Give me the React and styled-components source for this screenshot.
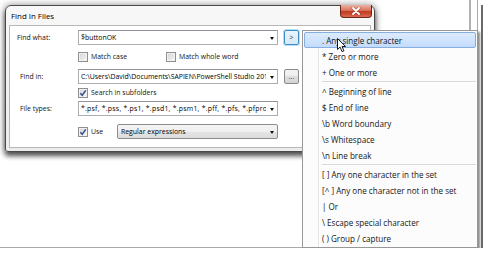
import React from "react";
import styled, { createGlobalStyle } from "styled-components";

const GlobalStyle = createGlobalStyle`
  html, body {
    margin: 0;
    padding: 0;
    background: #fff;
  }
  body {
    font-family: "Open Sans", "Noto Sans", sans-serif;
    color: #1b1b1b;
  }
`;

const patterns = [
  { text: ". Any single character", active: true },
  { text: "* Zero or more" },
  { text: "+ One or more" },
  { sep: true },
  { text: "^ Beginning of line" },
  { text: "$ End of line" },
  { text: "\\b Word boundary" },
  { text: "\\s Whitespace" },
  { text: "\\n Line break" },
  { sep: true },
  { text: "[ ] Any one character in the set" },
  { text: "[^ ] Any one character not in the set" },
  { text: "| Or" },
  { text: "\\ Escape special character" },
  { text: "( ) Group / capture" },
];

const CheckMark = () => (
  <svg width="8" height="8" viewBox="0 0 8 8">
    <path d="M1.3 4.2 L3.2 6.3 L6.8 1.4" fill="none" stroke="#3b4f8c" strokeWidth="1.5" />
  </svg>
);

const Checkbox = ({ checked }) => <Box>{checked && <CheckMark />}</Box>;

const App = () => {
  return (
    <>
      <GlobalStyle />
      <Stage>
        <Dialog>
          <TitleBar>
            <Title>Find In Files</Title>
            <CloseButton>
              <svg width="10" height="8" viewBox="0 0 10 8">
                <path d="M2 1 L8 7 M8 1 L2 7" stroke="#7a2414" strokeWidth="3" strokeLinecap="round" opacity="0.5" />
                <path d="M2 1 L8 7 M8 1 L2 7" stroke="#fff" strokeWidth="1.8" strokeLinecap="round" />
              </svg>
            </CloseButton>
          </TitleBar>
          <Client>
            <FieldRow $top={4}>
              <Label $indent={7}>Find what:</Label>
              <Combo>
                <ComboText>$buttonOK</ComboText>
                <Arrow />
              </Combo>
              <SmallButton $focused>&gt;</SmallButton>
            </FieldRow>
            <OptionRow $top={6}>
              <Option $width={88}>
                <Checkbox />
                Match case
              </Option>
              <Option>
                <Checkbox />
                Match whole word
              </Option>
            </OptionRow>
            <FieldRow $top={7}>
              <Label $indent={10}>Find in:</Label>
              <Combo>
                <ComboText>C:\Users\David\Documents\SAPIEN\PowerShell Studio 2012</ComboText>
                <Arrow />
              </Combo>
              <SmallButton>...</SmallButton>
            </FieldRow>
            <OptionRow $top={3}>
              <Option>
                <Checkbox checked />
                Search in subfolders
              </Option>
            </OptionRow>
            <FieldRow $top={3}>
              <Label $indent={10}>File types:</Label>
              <Combo>
                <ComboText $spacing={0.25}>
                  *.psf, *.pss, *.ps1, *.psd1, *.psm1, *.pff, *.pfs, *.pfproj
                </ComboText>
                <Arrow />
              </Combo>
            </FieldRow>
            <OptionRow $top={8} $height={15}>
              <Option $width={39}>
                <Checkbox checked />
                Use
              </Option>
              <Select>
                <ComboText>Regular expressions</ComboText>
                <Arrow />
              </Select>
            </OptionRow>
          </Client>
        </Dialog>

        <Menu>
          {patterns.map((p, i) =>
            p.sep ? (
              <Separator key={i} />
            ) : (
              <MenuItem key={i} $active={p.active}>
                {p.text}
              </MenuItem>
            )
          )}
        </Menu>

        <Cursor width="10" height="15" viewBox="0 0 10 15">
          <path
            d="M0.5 0.5 L0.5 11.5 L3.1 9.1 L5 13.6 L6.9 12.8 L5 8.5 L8.6 8.5 Z"
            fill="#fff"
            stroke="#000"
            strokeWidth="0.9"
            strokeLinejoin="round"
          />
        </Cursor>
      </Stage>
    </>
  );
};

export default App;

const Stage = styled.div`
  position: relative;
  width: 478px;
  height: 248px;
  box-sizing: border-box;
  padding: 5px 0 0 5px;
  background: #fff;
  border-right: 1px solid #a9a9a9;
  border-bottom: 1px solid #a9a9a9;
  box-shadow: 3px 3px 0 0 #fff, 5px 5px 0 0 #6a6a6a;

  &::before {
    content: "";
    position: absolute;
    left: 469px;
    top: 0;
    width: 2px;
    height: 40px;
    background: #b0b0b0;
  }
`;

const Dialog = styled.div`
  width: 370px;
  height: 147px;
  box-sizing: border-box;
  display: flex;
  flex-direction: column;
  padding: 0 3px 3px;
  border: 1px solid #4a4a4a;
  border-radius: 6px 6px 3px 3px;
  background: linear-gradient(#f8f8f8, #ececec);
  box-shadow: 0 4px 5px 0 rgba(0, 0, 0, 0.6), 0 0 7px 1px rgba(0, 0, 0, 0.35);
`;

const TitleBar = styled.div`
  height: 19px;
  flex: none;
  display: flex;
  align-items: center;
  padding-left: 2px;
`;

const Title = styled.span`
  font-size: 7.9px;
  color: #000;
`;

const CloseButton = styled.div`
  align-self: flex-start;
  margin: -1px -1px 0 auto;
  width: 32px;
  height: 13px;
  box-sizing: border-box;
  display: flex;
  align-items: center;
  justify-content: center;
  border: 1px solid #6c2618;
  border-top: none;
  border-radius: 0 0 4px 4px;
  background: linear-gradient(#eab2a4 0%, #d9735d 45%, #c2391f 55%, #d86b52 100%);
`;

const Client = styled.div`
  flex: 1;
  display: flex;
  flex-direction: column;
  background: #fff;
  border: 1px solid #b8b8b8;
  font-size: 6.9px;
`;

const FieldRow = styled.div`
  display: flex;
  align-items: center;
  height: 15px;
  margin-top: ${(p) => p.$top}px;
`;

const Label = styled.span`
  width: 68px;
  box-sizing: border-box;
  padding-left: ${(p) => p.$indent}px;
  color: #111;
`;

const Combo = styled.div`
  width: 200px;
  height: 15px;
  box-sizing: border-box;
  display: flex;
  align-items: center;
  padding: 0 2px 0 2px;
  border: 1px solid #abadb3;
  border-top-color: #8f949b;
  background: #fff;
  color: #000;
`;

const ComboText = styled.span`
  flex: 1;
  overflow: hidden;
  white-space: nowrap;
  letter-spacing: ${(p) => p.$spacing || 0}px;
`;

const Arrow = styled.span`
  flex: none;
  width: 0;
  height: 0;
  margin: 1px 1px 0 4px;
  border-left: 2.5px solid transparent;
  border-right: 2.5px solid transparent;
  border-top: 3px solid #111;
`;

const SmallButton = styled.div`
  width: 15px;
  height: 15px;
  margin-left: 6px;
  box-sizing: border-box;
  display: flex;
  align-items: center;
  justify-content: center;
  font-size: 7px;
  color: #333;
  border: 1px solid ${(p) => (p.$focused ? "#3d8ec8" : "#8a8a8a")};
  border-radius: 2px;
  background: ${(p) =>
    p.$focused
      ? "linear-gradient(#eaf4fb, #d6e9f7)"
      : "linear-gradient(#f4f4f4 0%, #ececec 50%, #dfdfdf 50%, #d4d4d4 100%)"};
  box-shadow: ${(p) => (p.$focused ? "0 0 0 1px #b7dcf3" : "none")};
`;

const OptionRow = styled.div`
  display: flex;
  align-items: center;
  height: ${(p) => p.$height || 11}px;
  margin-top: ${(p) => p.$top}px;
  padding-left: 68px;
`;

const Option = styled.label`
  display: flex;
  align-items: center;
  gap: 3px;
  width: ${(p) => (p.$width ? `${p.$width}px` : "auto")};
  color: #111;
`;

const Box = styled.span`
  width: 10px;
  height: 10px;
  flex: none;
  box-sizing: border-box;
  display: flex;
  align-items: center;
  justify-content: center;
  border: 1px solid #8e8f8f;
  background: linear-gradient(135deg, #d2d4d7, #f6f6f6);
  box-shadow: inset 0 0 0 1px #f2f2f2;
`;

const Select = styled.div`
  width: 161px;
  height: 15px;
  box-sizing: border-box;
  display: flex;
  align-items: center;
  padding: 0 2px 0 3px;
  border: 1px solid #8c8c8c;
  border-radius: 2px;
  background: linear-gradient(#f5f5f5 0%, #efefef 50%, #e5e5e5 51%, #dcdcdc 100%);
  color: #000;
`;

const Menu = styled.div`
  position: absolute;
  left: 302px;
  top: 30px;
  width: 176px;
  box-sizing: border-box;
  padding: 1px;
  border: 1px solid #979797;
  background: #fcfcfc;
  box-shadow: 2px 2px 2px rgba(0, 0, 0, 0.45);
  font-size: 8.1px;
  color: #151515;

  &::before {
    content: "";
    position: absolute;
    left: 15px;
    top: 0;
    bottom: 0;
    width: 1px;
    background: #e4e4e4;
    box-shadow: 1px 0 0 #fff;
  }
`;

const MenuItem = styled.div`
  position: relative;
  height: 16px;
  box-sizing: border-box;
  display: flex;
  align-items: center;
  padding-left: 17px;
  white-space: nowrap;
  border: 1px solid ${(p) => (p.$active ? "#86aee0" : "transparent")};
  border-radius: 2px;
  background: ${(p) => (p.$active ? "linear-gradient(#dcebfd, #c3dcfb)" : "transparent")};
`;

const Separator = styled.div`
  position: relative;
  height: 3px;
  margin-left: 18px;
  display: flex;
  align-items: center;

  &::after {
    content: "";
    flex: 1;
    height: 1px;
    background: #d8d8d8;
    box-shadow: 0 1px 0 #fff;
  }
`;

const Cursor = styled.svg`
  position: absolute;
  left: 337px;
  top: 38px;
`;
